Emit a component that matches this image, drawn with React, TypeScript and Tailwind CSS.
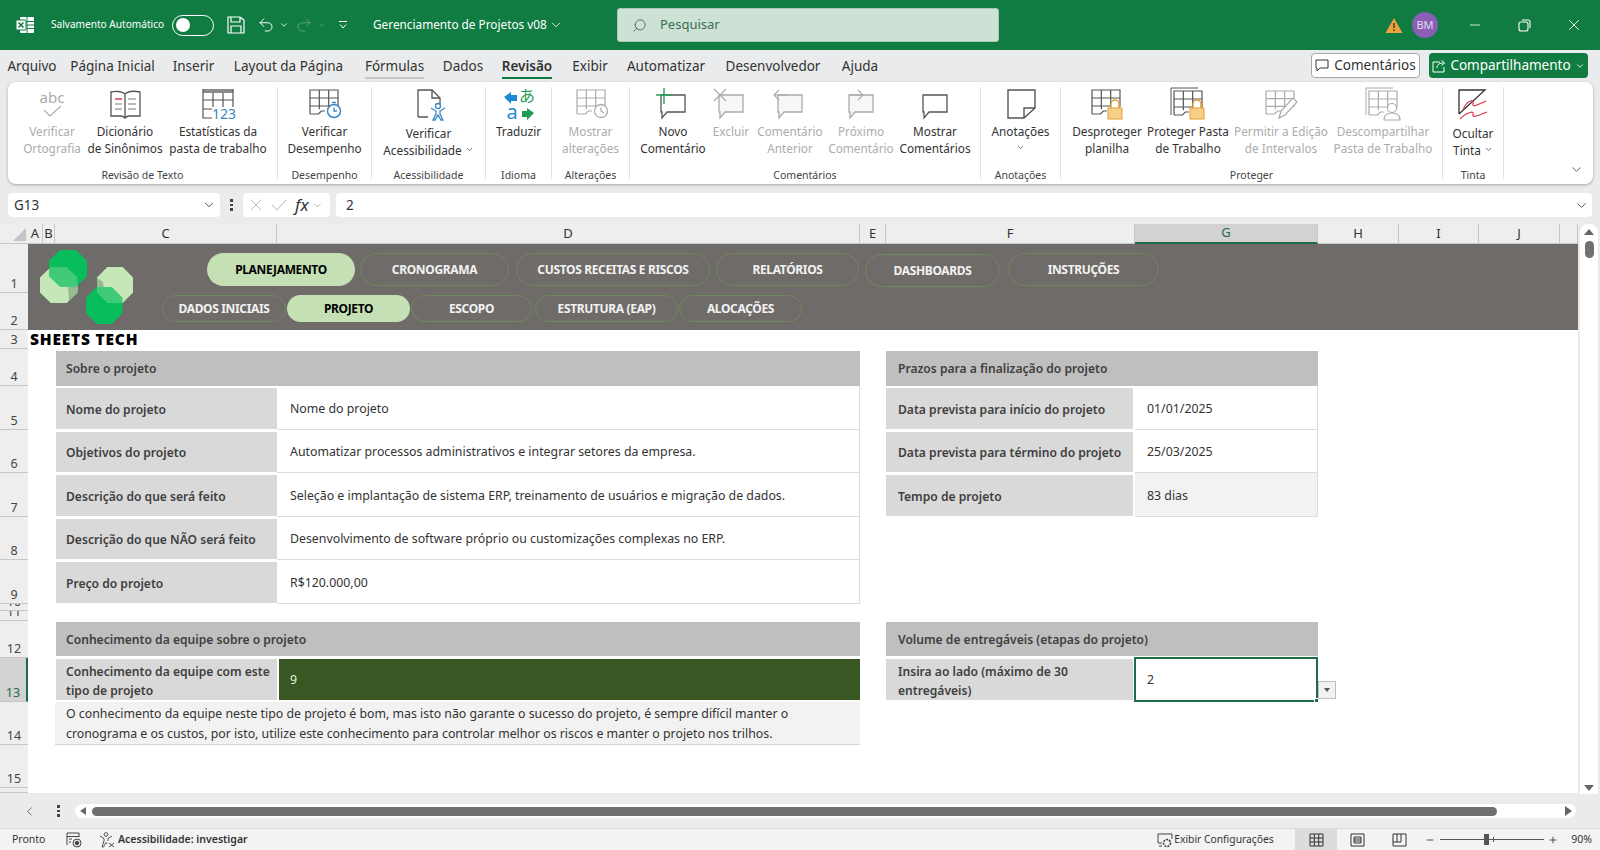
import { ChevronDown, ChevronLeft, Minus, Plus, Redo2, Search, Undo2, X } from 'lucide-react';
import type { ReactNode } from 'react';

const OFF = '#ababab';
const INK = '#555555';

// ---- ribbon icons ----

function Sheet({ x = 2, y = 2, w = 28, h = 25, c = INK, fold = true }: { x?: number; y?: number; w?: number; h?: number; c?: string; fold?: boolean }) {
  const cw = w / 3;
  const rh = h / 3;
  return (
    <g fill="none" stroke={c} strokeWidth="1.2">
      <path d={`M${x} ${y + h}V${y}H${x + w}V${y + h * 0.7}`} />
      <path d={`M${x} ${y + rh}H${x + w}M${x} ${y + 2 * rh}H${x + w}M${x + cw} ${y}V${y + h * 0.8}M${x + 2 * cw} ${y}V${y + h * 0.7}`} />
      {fold && <path d={`M${x} ${y + h}H${x + cw * 0.9}l3 -3H${x + cw * 1.6}`} />}
    </g>
  );
}

function Lock({ x, y }: { x: number; y: number }) {
  return (
    <g>
      <path d={`M${x + 3} ${y + 8}v-4a4 4 0 0 1 8 0v4`} fill="#fff" stroke="#e2a13b" strokeWidth="1.5" />
      <rect x={x} y={y + 8} width="14" height="11" fill="#f7cf86" stroke="#e2a13b" />
    </g>
  );
}

function Bubble({ c = INK, fill = 'none' }: { c?: string; fill?: string }) {
  return <path d="M6 8H30V25H12L7 31V25H6Z" fill={fill} stroke={c} strokeWidth="1.3" transform="translate(0 -1)" />;
}

const icons: Record<string, ReactNode> = {
  abc: (
    <>
      <text x="18" y="15" textAnchor="middle" fontSize="15" fill={OFF} fontFamily="Noto Sans">abc</text>
      <path d="M10 22l6 6L27 18" fill="none" stroke={OFF} strokeWidth="1.1" />
    </>
  ),
  book: (
    <>
      <path d="M18 6C15 3 8 3 4 4V28H14C16 28 17 29 18 30C19 29 20 28 22 28H33V4C28 3 21 3 18 6ZM18 6V30" fill="none" stroke={INK} strokeWidth="1.3" />
      <path d="M8 11H15" stroke="#e0455a" strokeWidth="1.6" />
      <path d="M8 16H15M8 21H15M21 11H29M21 16H29M21 21H29" stroke="#777" strokeWidth="1.2" />
    </>
  ),
  stats: (
    <>
      <rect x="3" y="1" width="30" height="4" fill="#8b8b8b" />
      <path d="M3 1V30H12M33 1V19M3 12H33M3 21H12M13 5V19M23 5V19" fill="none" stroke={INK} strokeWidth="1.2" />
      <text x="24" y="31" textAnchor="middle" fontSize="14" fill="#3b87c4" fontFamily="Noto Sans">123</text>
    </>
  ),
  perf: (
    <>
      <Sheet x={3} y={2} w={28} h={24} />
      <circle cx="27" cy="23" r="6.5" fill="#fff" stroke="#3b87c4" strokeWidth="1.5" />
      <path d="M27 19.5V23H30M25 14.5h4" fill="none" stroke="#3b87c4" strokeWidth="1.3" />
    </>
  ),
  access: (
    <>
      <path d="M7 29V2H21L29 10V17M21 2V10H29M7 29H17" fill="#fff" stroke={INK} strokeWidth="1.3" />
      <circle cx="27" cy="18" r="2.5" fill="none" stroke="#3b87c4" strokeWidth="1.3" />
      <path d="M20 20l5 3v3l-3 6h2l3-5 3 5h2l-3-6v-3l5-3" fill="none" stroke="#3b87c4" strokeWidth="1.3" />
    </>
  ),
  translate: (
    <>
      <path d="M3 9L10 4V7H16V13H10V16Z" fill="#1f8ad2" />
      <text x="26" y="14" textAnchor="middle" fontSize="16" fill="#1f9d55" fontFamily="Noto Sans CJK JP">あ</text>
      <text x="11" y="31" textAnchor="middle" fontSize="20" fill="#1f8ad2" fontFamily="Noto Sans">a</text>
      <path d="M33 25L26 20V23H21V29H26V32Z" fill="#1f9d55" />
    </>
  ),
  changes: (
    <>
      <Sheet x={4} y={2} w={28} h={24} c={OFF} />
      <circle cx="28" cy="23" r="6.5" fill="#fff" stroke={OFF} strokeWidth="1.3" />
      <path d="M28 19.5V23L31 25" fill="none" stroke={OFF} strokeWidth="1.2" />
    </>
  ),
  newComment: (
    <>
      <Bubble />
      <path d="M1 7H17M9 0V16" stroke="#2d9e5e" strokeWidth="1.4" />
    </>
  ),
  del: (
    <>
      <Bubble c={OFF} fill="#f7f7f7" />
      <path d="M1 1L13 13M13 1L1 13" stroke={OFF} strokeWidth="1.2" />
    </>
  ),
  prev: (
    <>
      <Bubble c={OFF} fill="#f7f7f7" />
      <path d="M2 7H16M7 2L2 7L7 12" fill="none" stroke={OFF} strokeWidth="1.2" />
    </>
  ),
  next: (
    <>
      <Bubble c={OFF} fill="#f7f7f7" />
      <path d="M6 7H20M15 2L20 7L15 12" fill="none" stroke={OFF} strokeWidth="1.2" />
    </>
  ),
  show: <Bubble />,
  note: <path d="M5 2H32V20L21 30H5ZM21 30V20H32" fill="none" stroke={INK} strokeWidth="1.4" />,
  unprotect: (
    <>
      <Sheet x={3} y={2} w={28} h={24} />
      <Lock x={19} y={12} />
    </>
  ),
  protect: (
    <>
      <path d="M1 27V0H28" fill="none" stroke={INK} strokeWidth="1" />
      <Sheet x={4} y={3} w={28} h={24} />
      <Lock x={20} y={12} />
    </>
  ),
  allow: (
    <>
      <Sheet x={3} y={3} w={28} h={23} c={OFF} />
      <path d="M16 30l2-7L30 10l4 4L22 27Z" fill="#fff" stroke={OFF} strokeWidth="1.2" />
    </>
  ),
  share: (
    <>
      <path d="M1 27V0H28" fill="none" stroke={OFF} strokeWidth="1" />
      <Sheet x={4} y={3} w={28} h={24} c={OFF} />
      <circle cx="27" cy="20" r="4.5" fill="#fff" stroke={OFF} strokeWidth="1.2" />
      <path d="M19 32c0-6 4-7 8-7s8 1 8 7Z" fill="#fff" stroke={OFF} strokeWidth="1.2" />
    </>
  ),
  ink: (
    <>
      <path d="M4 26V2H30L4 26" fill="none" stroke="#333" strokeWidth="1.3" />
      <path d="M8 22C12 12 20 10 18 16C17 20 24 16 31 13" fill="none" stroke="#d8384f" strokeWidth="1.2" />
      <path d="M5 31C12 24 20 22 18 27C17 30 25 27 32 24" fill="none" stroke="#d8384f" strokeWidth="1.2" />
    </>
  ),
};

type RibbonBtn = { icon: string; lines: string[]; w: number; off?: boolean; low?: boolean; chev?: boolean };
type RibbonGroup = { title: string; w: number; pl?: number; btns: RibbonBtn[] };

const ribbon: RibbonGroup[] = [
  {
    title: 'Revisão de Texto',
    w: 270,
    pl: 9,
    btns: [
      { icon: 'abc', lines: ['Verificar', 'Ortografia'], w: 70, off: true },
      { icon: 'book', lines: ['Dicionário', 'de Sinônimos'], w: 76 },
      { icon: 'stats', lines: ['Estatísticas da', 'pasta de trabalho'], w: 110 },
    ],
  },
  { title: 'Desempenho', w: 94, btns: [{ icon: 'perf', lines: ['Verificar', 'Desempenho'], w: 94 }] },
  { title: 'Acessibilidade', w: 114, btns: [{ icon: 'access', lines: ['Verificar', 'Acessibilidade'], w: 114, low: true, chev: true }] },
  { title: 'Idioma', w: 66, btns: [{ icon: 'translate', lines: ['Traduzir'], w: 66 }] },
  { title: 'Alterações', w: 78, btns: [{ icon: 'changes', lines: ['Mostrar', 'alterações'], w: 78, off: true }] },
  {
    title: 'Comentários',
    w: 351,
    pl: 5,
    btns: [
      { icon: 'newComment', lines: ['Novo', 'Comentário'], w: 76 },
      { icon: 'del', lines: ['Excluir'], w: 40, off: true },
      { icon: 'prev', lines: ['Comentário', 'Anterior'], w: 78, off: true },
      { icon: 'next', lines: ['Próximo', 'Comentário'], w: 64, off: true },
      { icon: 'show', lines: ['Mostrar', 'Comentários'], w: 84 },
    ],
  },
  { title: 'Anotações', w: 80, btns: [{ icon: 'note', lines: ['Anotações', ''], w: 80, chev: true }] },
  {
    title: 'Proteger',
    w: 382,
    pl: 4,
    btns: [
      { icon: 'unprotect', lines: ['Desproteger', 'planilha'], w: 84 },
      { icon: 'protect', lines: ['Proteger Pasta', 'de Trabalho'], w: 78 },
      { icon: 'allow', lines: ['Permitir a Edição', 'de Intervalos'], w: 108, off: true },
      { icon: 'share', lines: ['Descompartilhar', 'Pasta de Trabalho'], w: 96, off: true },
    ],
  },
  { title: 'Tinta', w: 61, btns: [{ icon: 'ink', lines: ['Ocultar', 'Tinta'], w: 61, low: true, chev: true }] },
];

const tabs: [string, number][] = [
  ['Arquivo', 64],
  ['Página Inicial', 97],
  ['Inserir', 65],
  ['Layout da Página', 125],
  ['Fórmulas', 87],
  ['Dados', 50],
  ['Revisão', 78],
  ['Exibir', 48],
  ['Automatizar', 104],
  ['Desenvolvedor', 110],
  ['Ajuda', 64],
];

function TitleBar() {
  return (
    <div className="flex h-[50px] items-center bg-[#107c41] text-white">
      <svg width="20" height="20" viewBox="0 0 20 20" className="ml-[15px]">
        <rect x="5" y="2" width="14" height="16" rx="1" fill="#fff" />
        <path d="M12 2V18M12 6.5H19M12 10H19M12 13.5H19" stroke="#107c41" strokeWidth="1" />
        <rect x="1" y="5" width="10" height="10" rx="1" fill="#fff" stroke="#107c41" />
        <path d="M3.5 7.5L8.5 12.5M8.5 7.5L3.5 12.5" stroke="#107c41" strokeWidth="1.6" />
      </svg>
      <span className="ml-[16px] w-[121px] text-[10.1px] whitespace-nowrap">Salvamento Automático</span>
      <div className="flex h-[21px] w-[42px] items-center rounded-full border border-white pl-[3px]">
        <div className="h-[14px] w-[14px] rounded-full bg-white" />
      </div>
      <svg width="18" height="18" viewBox="0 0 18 18" className="ml-[13px]" fill="none" stroke="#fff" strokeWidth="1.2">
        <path d="M1 1H13L17 4V17H1ZM4 1V6H13V1M4 17V10H14V17" />
      </svg>
      <Undo2 size={18} strokeWidth={1.3} className="ml-[12px]" />
      <ChevronDown size={10} className="ml-[4px]" />
      <Redo2 size={18} strokeWidth={1.3} className="ml-[6px] text-[#5aa67e]" />
      <ChevronDown size={10} className="ml-[4px] text-[#5aa67e]" />
      <svg width="10" height="10" viewBox="0 0 10 10" className="ml-[11px]" fill="none" stroke="#fff">
        <path d="M1 1.5H9M2 4.5L5 8L8 4.5" />
      </svg>
      <span className="ml-[25px] w-[176px] text-[11.8px] whitespace-nowrap">Gerenciamento de Projetos v08</span>
      <ChevronDown size={14} strokeWidth={1.4} />
      <div className="ml-[54px] flex h-[34px] w-[382px] items-center rounded-[3px] border border-[#a9c9b6] bg-[#cde2d5] pl-[14px] text-[13px] text-[#3c6e52]">
        <Search size={15} strokeWidth={1.4} className="-scale-x-100" />
        <span className="ml-[13px]">Pesquisar</span>
      </div>
      <svg width="18" height="17" viewBox="0 0 18 17" className="ml-[386px]">
        <path d="M9 1L17.5 16H.5Z" fill="#eba43c" />
        <path d="M9 6V11M9 12.5V14" stroke="#4a3a1c" strokeWidth="1.5" />
      </svg>
      <div className="ml-[9px] flex h-[26px] w-[26px] items-center justify-center rounded-full bg-[#8a5fb5] text-[11px] text-[#e6ddf0]">BM</div>
      <Minus size={16} strokeWidth={1.2} className="ml-[29px]" />
      <svg width="13" height="13" viewBox="0 0 13 13" className="ml-[35px]" fill="none" stroke="#fff" strokeWidth="1.1">
        <rect x="1" y="3" width="9" height="9" rx="2" />
        <path d="M4 1H10C11.5 1 12 1.8 12 3V9" />
      </svg>
      <X size={18} strokeWidth={1.2} className="ml-[34px]" />
    </div>
  );
}

function TabsRow() {
  return (
    <div className="flex h-[32px] items-start text-[13.5px] text-[#333]">
      {tabs.map(([label, w]) => (
        <div key={label} className="flex h-full justify-center whitespace-nowrap" style={{ width: w }}>
          <span
            className={
              label === 'Revisão'
                ? 'h-[29px] border-b-[2px] border-[#107c41] pt-[6px] font-semibold'
                : label === 'Fórmulas'
                  ? 'h-[29px] border-b-[2px] border-[#c4c6c8] pt-[6px]'
                  : 'h-[29px] pt-[6px]'
            }
          >
            {label}
          </span>
        </div>
      ))}
      <div className="mt-[3px] ml-[419px] flex h-[25px] w-[109px] items-center justify-center gap-[5px] rounded-[4px] border border-[#a8a8a8] bg-white">
        <svg width="14" height="13" viewBox="0 0 14 13" fill="none" stroke="#333">
          <path d="M1 1H13V9H5L2 12V9H1Z" />
        </svg>
        Comentários
      </div>
      <div className="mt-[3px] ml-[9px] flex h-[25px] w-[159px] items-center justify-center gap-[4px] rounded-[4px] bg-[#107c41] text-white">
        <svg width="14" height="14" viewBox="0 0 14 14" fill="none" stroke="#fff">
          <path d="M8 3H1V13H12V8M5 9C5 5 8 4 12 4M9.5 1.5L12.5 4L9.5 6.5" />
        </svg>
        Compartilhamento
        <ChevronDown size={10} />
      </div>
    </div>
  );
}

function Ribbon() {
  return (
    <div className="relative mx-[8px] flex h-[102px] w-[1585px] rounded-[8px] bg-white shadow-[0_1px_3px_rgba(0,0,0,0.3)]">
      {ribbon.map((g) => (
        <div key={g.title} className="my-[5px] flex flex-col border-r border-[#e1e1e1] pt-[1px]" style={{ width: g.w, paddingLeft: g.pl ?? 0 }}>
          <div className="flex flex-1">
            {g.btns.map((b) => (
              <div key={b.lines[0] + b.icon} className="flex flex-col items-center whitespace-nowrap" style={{ width: b.w }}>
                <svg width="36" height="32" viewBox="0 0 36 32" overflow="visible">
                  {icons[b.icon]}
                </svg>
                <div className={`text-center text-[11.8px] leading-[16.5px] ${b.low ? 'mt-[5px]' : 'mt-[3px]'} ${b.off ? 'text-[#acacac]' : 'text-[#333]'}`}>
                  {b.lines.map((l, i) => (
                    <div key={i} className="flex h-[16.5px] items-center justify-center gap-[3px]">
                      {l}
                      {b.chev && i === b.lines.length - 1 && <ChevronDown size={9} strokeWidth={1.8} />}
                    </div>
                  ))}
                </div>
              </div>
            ))}
          </div>
          <div className="-mb-[5px] h-[18px] text-center text-[10.5px] leading-[18px] text-[#444]" style={{ marginLeft: -(g.pl ?? 0) }}>
            {g.title}
          </div>
        </div>
      ))}
      <ChevronDown size={15} strokeWidth={1.3} className="absolute right-[9px] bottom-[7px] text-[#444]" />
    </div>
  );
}

function FormulaBar() {
  return (
    <div className="mx-[8px] mt-[9px] flex h-[24px] items-center text-[13.5px] text-[#333]">
      <div className="flex h-full w-[212px] items-center justify-between rounded-[4px] bg-white pr-[4px] pl-[6px]">
        G13
        <ChevronDown size={14} strokeWidth={1.5} />
      </div>
      <div className="flex w-[23px] flex-col items-center gap-[2px]">
        <div className="h-[2.5px] w-[2.5px] bg-[#444]" />
        <div className="h-[2.5px] w-[2.5px] bg-[#444]" />
        <div className="h-[2.5px] w-[2.5px] bg-[#444]" />
      </div>
      <div className="flex h-full w-[87px] items-center rounded-[4px] bg-white pl-[3px] text-[#b5b5b5]">
        <X size={20} strokeWidth={1} />
        <svg width="16" height="14" viewBox="0 0 16 14" className="ml-[5px]" fill="none" stroke="#b5b5b5">
          <path d="M1 7L6 12L15 2" />
        </svg>
        <span className="ml-[8px] font-['Liberation_Serif',serif] text-[17px] font-normal text-[#333] italic">fx</span>
        <ChevronDown size={11} strokeWidth={1.2} className="ml-[3px] text-[#777]" />
      </div>
      <div className="ml-[6px] flex h-full flex-1 items-center justify-between rounded-[4px] bg-white pr-[3px] pl-[10px]">
        2
        <ChevronDown size={15} strokeWidth={1.4} />
      </div>
    </div>
  );
}

// ---- sheet ----

const colHeads: [string, number][] = [
  ['A', 15],
  ['B', 12],
  ['C', 222],
  ['D', 583],
  ['E', 26],
  ['F', 249],
  ['G', 183],
  ['H', 81],
  ['I', 80],
  ['J', 81],
  ['', 18],
];

const rowHeights = [49, 37, 19, 37, 44, 43, 44, 43, 44, 7, 10, 37, 44, 43, 43, 5];

function Logo() {
  const oct = (x: number, y: number, w: number, h: number) => {
    const a = w * 0.29;
    const b = h * 0.29;
    return `${x + a},${y} ${x + w - a},${y} ${x + w},${y + b} ${x + w},${y + h - b} ${x + w - a},${y + h} ${x + a},${y + h} ${x},${y + h - b} ${x},${y + b}`;
  };
  return (
    <svg width="93" height="74" viewBox="0 0 93 74" className="mt-[6px] ml-[12px] shrink-0">
      <polygon points={oct(0, 17, 37.5, 36)} fill="#c6e9b8" />
      <polygon points={oct(57, 17, 36, 36)} fill="#c6e9b8" />
      <polygon points="28,36 37.5,30 37.5,43 29,51" fill="#86a67f" />
      <polygon points="57,28 63,32 64,40 57,43" fill="#86a67f" />
      <polygon points={oct(9, 0, 38, 37)} fill="#08bd5c" />
      <polygon points={oct(46, 37, 36.5, 37)} fill="#08bd5c" />
      <polygon points={oct(0, 17, 37.5, 36)} fill="#c6e9b8" fillOpacity="0.3" />
      <polygon points={oct(57, 17, 36, 36)} fill="#c6e9b8" fillOpacity="0.3" />
    </svg>
  );
}

const navTop: [string, number, number][] = [
  ['PLANEJAMENTO', 148, 0],
  ['CRONOGRAMA', 149, 5],
  ['CUSTOS RECEITAS E RISCOS', 194, 7],
  ['RELATÓRIOS', 143, 6],
  ['DASHBOARDS', 135, 6],
  ['INSTRUÇÕES', 151, 8],
];

const navBottom: [string, number, number][] = [
  ['DADOS INICIAIS', 124, 0],
  ['PROJETO', 123, 1],
  ['ESCOPO', 121, 1],
  ['ESTRUTURA (EAP)', 143, 3],
  ['ALOCAÇÕES', 123, 1],
];

function Pill({ label, w, gap, active }: { label: string; w: number; gap: number; active: boolean }) {
  return (
    <div
      className={`flex h-full items-center justify-center rounded-full text-[12px] font-bold tracking-[-0.35px] ${
        active ? 'bg-[#c5e0b4] text-black' : 'border border-[#70885c] text-[#f2f2f2]'
      } ${label === 'DASHBOARDS' ? 'mt-px' : ''}`}
      style={{ width: w, marginLeft: gap }}
    >
      {label}
    </div>
  );
}

function Band() {
  return (
    <div className="col-span-full col-start-1 row-span-2 row-start-1 flex bg-[#6f6b69]">
      <Logo />
      <div className="flex flex-col pt-[9px]">
        <div className="ml-[74px] flex h-[33px]">
          {navTop.map(([l, w, g]) => (
            <Pill key={l} label={l} w={w} gap={g} active={l === 'PLANEJAMENTO'} />
          ))}
        </div>
        <div className="mt-[9px] ml-[29px] flex h-[27px]">
          {navBottom.map(([l, w, g]) => (
            <Pill key={l} label={l} w={w} gap={g} active={l === 'PROJETO'} />
          ))}
        </div>
      </div>
    </div>
  );
}

const aboutRows: [string, string][] = [
  ['Nome do projeto', 'Nome do projeto'],
  ['Objetivos do projeto', 'Automatizar processos administrativos e integrar setores da empresa.'],
  ['Descrição do que será feito', 'Seleção e implantação de sistema ERP, treinamento de usuários e migração de dados.'],
  ['Descrição do que NÃO será feito', 'Desenvolvimento de software próprio ou customizações complexas no ERP.'],
  ['Preço do projeto', 'R$120.000,00'],
];

const deadlineRows: [string, string][] = [
  ['Data prevista para início do projeto', '01/01/2025'],
  ['Data prevista para término do projeto', '25/03/2025'],
  ['Tempo de projeto', '83 dias'],
];

const rowClass: Record<number, string> = {
  5: 'row-start-5',
  6: 'row-start-6',
  7: 'row-start-7',
  8: 'row-start-8',
  9: 'row-start-9',
};

const head = 'flex items-center bg-[#bfbfbf] pt-[2px] text-[12.1px] font-semibold text-[#404040]';
const label = 'flex items-center bg-[#d9d9d9] pt-[3px] text-[12.1px] font-semibold text-[#404040]';

function SheetGrid() {
  return (
    <div className="grid h-[549px] grid-cols-[15px_12px_222px_583px_26px_249px_183px_81px_80px_81px_18px] grid-rows-[49px_37px_19px_37px_44px_43px_44px_43px_44px_7px_10px_37px_44px_43px_43px_5px] bg-white text-[12.33px] text-[#333]">
      <Band />
      <div className="col-span-3 col-start-1 row-start-3 pl-[2px] font-['Inter',sans-serif] text-[15.5px] leading-[19px] font-black tracking-[0.8px] whitespace-nowrap text-black">
        SHEETS TECH
      </div>

      <div className={`${head} col-span-2 col-start-3 row-start-4 mt-[2px] ml-px pl-[10px]`}>Sobre o projeto</div>
      {aboutRows.map(([l, value], i) => (
        <div key={l} className="contents">
          <div className={`${label} col-start-3 ${rowClass[5 + i]} mt-[2px] mb-px ml-px pl-[10px]`}>{l}</div>
          <div className={`col-start-4 ${rowClass[5 + i]} flex items-center border-r border-b border-[#dcdcdc] pt-[3px] pl-[13px]`}>{value}</div>
        </div>
      ))}

      <div className={`${head} col-span-2 col-start-6 row-start-4 mt-[2px] pl-[12px]`}>Prazos para a finalização do projeto</div>
      {deadlineRows.map(([l, value], i) => (
        <div key={l} className="contents">
          <div className={`${label} col-start-6 ${rowClass[5 + i]} mt-[2px] mr-[2px] mb-px pl-[12px]`}>{l}</div>
          <div className={`col-start-7 ${rowClass[5 + i]} flex items-center border-r border-b border-[#dcdcdc] pt-[3px] pl-[12px] ${i === 2 ? 'bg-[#f2f2f2]' : ''}`}>{value}</div>
        </div>
      ))}

      <div className={`${head} col-span-2 col-start-3 row-start-12 mt-px mb-[2px] ml-px pl-[10px]`}>Conhecimento da equipe sobre o projeto</div>
      <div className={`${label} col-start-3 row-start-13 mt-px mb-[2px] ml-px pl-[10px] leading-[19.5px]`}>Conhecimento da equipe com este tipo de projeto</div>
      <div className="col-start-4 row-start-13 mt-px mb-[2px] ml-[2px] flex items-center bg-[#385723] pt-[2px] pl-[11px] text-[#e2efda]">9</div>
      <div className="col-span-2 col-start-3 row-start-14 flex items-center border-b border-[#d4d4d4] bg-[#f2f2f2] pt-[2px] pr-[40px] pl-[11px] leading-[20px]">
        O conhecimento da equipe neste tipo de projeto é bom, mas isto não garante o sucesso do projeto, é sempre difícil manter o cronograma e os custos, por isto, utilize este conhecimento para controlar melhor os riscos e manter o projeto nos trilhos.
      </div>

      <div className={`${head} col-span-2 col-start-6 row-start-12 mt-px mb-[2px] pl-[12px]`}>Volume de entregáveis (etapas do projeto)</div>
      <div className={`${label} col-start-6 row-start-13 mt-px mr-[2px] mb-[2px] pl-[12px] leading-[19.5px]`}>Insira ao lado (máximo de 30 entregáveis)</div>
      <div className="relative col-start-7 row-start-13 -mt-px -ml-px flex items-center border-2 border-[#1f6b45] pt-[2px] pl-[11px]">
        2
        <div className="absolute -right-[3px] -bottom-[3px] h-[5px] w-[5px] border border-white bg-[#1f6b45]" />
        <div className="absolute -right-[20px] bottom-[1px] flex h-[18px] w-[18px] items-center justify-center border border-[#bdbdbd] bg-[#f2f2f2]">
          <div className="h-0 w-0 border-x-[3px] border-t-[4px] border-x-transparent border-t-[#555]" />
        </div>
      </div>
    </div>
  );
}

function SheetArea() {
  return (
    <div className="mt-[7px] flex h-[570px]">
      <div className="flex w-[1578px] flex-col">
        <div className="flex h-[20px] bg-[#eeeeee] text-[13px] text-[#333]">
          <div className="flex w-[28px] items-end justify-end border-b border-[#c6c6c6] pr-[2px] pb-[2px]">
            <div className="h-0 w-0 border-b-[13px] border-l-[13px] border-b-[#c4c4c4] border-l-transparent" />
          </div>
          {colHeads.map(([c, w]) => (
            <div
              key={c || 'k'}
              className={`flex items-center justify-center border-r ${
                c === 'G' ? 'border-b-2 border-r-[#c6c6c6] border-b-[#1f6b45] bg-[#d2d2d2] text-[#1f6b45]' : 'border-b border-[#c6c6c6]'
              }`}
              style={{ width: w }}
            >
              {c}
            </div>
          ))}
        </div>
        <div className="flex">
          <div className="w-[28px] shrink-0 bg-[#eeeeee] text-[12.5px] text-[#444]">
            {rowHeights.map((h, i) => (
              <div
                key={i}
                className={`flex items-end justify-center overflow-hidden border-b leading-[16px] ${
                  i === 12 ? 'border-r-2 border-b-[#c6c6c6] border-r-[#1f6b45] bg-[#d2d2d2] text-[#1f6b45]' : 'border-[#c6c6c6]'
                }`}
                style={{ height: h }}
              >
                {i < 15 ? i + 1 : ''}
              </div>
            ))}
          </div>
          <SheetGrid />
        </div>
      </div>
      <div className="ml-[2px] flex h-[570px] w-[18px] flex-col items-center rounded-t-[8px] bg-white pt-[5px]">
        <div className="h-0 w-0 border-x-[5px] border-b-[6px] border-x-transparent border-b-[#666]" />
        <div className="mt-[6px] h-[17px] w-[9px] rounded-full bg-[#707070]" />
        <div className="mt-auto mb-[3px] h-0 w-0 border-x-[5px] border-t-[6px] border-x-transparent border-t-[#666]" />
      </div>
    </div>
  );
}

function HScroll() {
  return (
    <div className="flex h-[34px] items-center">
      <ChevronLeft size={15} strokeWidth={1.3} className="ml-[22px] text-[#555]" />
      <div className="ml-[20px] flex w-[3px] flex-col gap-[2px]">
        <div className="h-[2.5px] w-[2.5px] bg-[#444]" />
        <div className="h-[2.5px] w-[2.5px] bg-[#444]" />
        <div className="h-[2.5px] w-[2.5px] bg-[#444]" />
      </div>
      <div className="ml-[15px] flex h-[14px] w-[1501px] items-center rounded-full bg-white">
        <div className="ml-[5px] h-0 w-0 border-y-[4px] border-r-[6px] border-y-transparent border-r-[#666]" />
        <div className="ml-[6px] h-[9px] w-[1405px] rounded-full bg-[#707070]" />
        <div className="mr-[4px] ml-auto h-0 w-0 border-y-[5px] border-l-[7px] border-y-transparent border-l-[#666]" />
      </div>
    </div>
  );
}

function StatusBar() {
  return (
    <div className="flex h-[22px] items-center border-t border-[#dcdcdc] bg-[#f3f3f3] text-[10.5px] text-[#333]">
      <span className="ml-[12px] w-[54px]">Pronto</span>
      <svg width="16" height="16" viewBox="0 0 16 16" fill="none" stroke="#444">
        <path d="M1 13V1H13V5M1 4.5H13M3 7H6M3 10H5" />
        <circle cx="11" cy="11" r="4" />
        <circle cx="11" cy="11" r="1.8" fill="#444" />
      </svg>
      <svg width="16" height="16" viewBox="0 0 16 16" className="ml-[17px]" fill="none" stroke="#444" strokeWidth="0.9">
        <circle cx="7" cy="2.5" r="1.8" />
        <path d="M1 4L5 6.5V9L3 15H4.5L7 10.5L8 12M13 4L9 6.5V9M10 11L15 15M15 11L10 15" />
      </svg>
      <span className="ml-[3px] font-semibold whitespace-nowrap">Acessibilidade: investigar</span>
      <div className="ml-auto flex h-full items-center">
        <svg width="16" height="16" viewBox="0 0 16 16" fill="none" stroke="#444">
          <path d="M5 11H1V2H15V7M2 14H5" />
          <circle cx="10" cy="11" r="3.5" strokeDasharray="2 1" strokeWidth="1.6" />
        </svg>
        <span className="ml-[1px] w-[121px] text-[10.3px] whitespace-nowrap">Exibir Configurações</span>
        <div className="flex h-full w-[42px] items-center justify-center bg-[#dcdcdc]">
          <svg width="15" height="14" viewBox="0 0 15 14" fill="none" stroke="#333">
            <path d="M1 1H14V13H1ZM1 5H14M1 9H14M5.3 1V13M9.7 1V13" />
          </svg>
        </div>
        <svg width="15" height="14" viewBox="0 0 15 14" className="ml-[13px]" fill="none" stroke="#333">
          <path d="M1 1H14V13H1ZM4 4H11V10H4ZM4 6H11M4 8H11" />
        </svg>
        <svg width="15" height="14" viewBox="0 0 15 14" className="ml-[27px]" fill="none" stroke="#333">
          <path d="M1 1H14V13H1ZM1 9H9V1M5 1V9" />
        </svg>
        <Minus size={10} className="ml-[18px]" />
        <div className="relative ml-[5px] h-px w-[104px] bg-[#555]">
          <div className="absolute -top-[5px] left-[44px] h-[11px] w-[5px] bg-[#555]" />
          <div className="absolute -top-[2px] left-[53px] h-[5px] w-px bg-[#555]" />
        </div>
        <Plus size={10} className="ml-[4px]" />
        <span className="mr-[8px] ml-[13px]">90%</span>
      </div>
    </div>
  );
}

export default function App() {
  return (
    <div className="flex h-[850px] w-[1600px] flex-col overflow-hidden bg-[#e9ebec] font-['Noto_Sans',sans-serif]">
      <TitleBar />
      <TabsRow />
      <Ribbon />
      <FormulaBar />
      <SheetArea />
      <HScroll />
      <StatusBar />
    </div>
  );
}
